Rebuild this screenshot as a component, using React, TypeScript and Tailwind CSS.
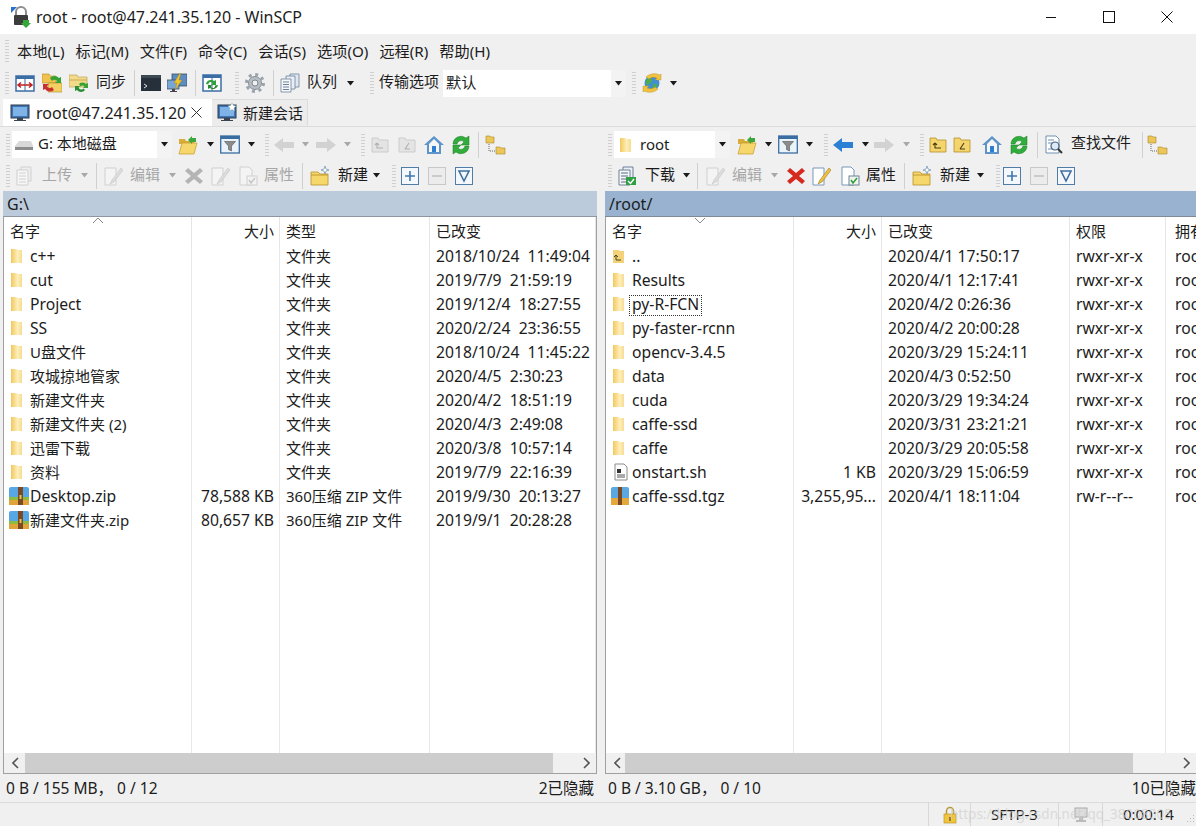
import React from "react";

const F = '"Noto Sans", "Noto Sans CJK SC", sans-serif';

type P = { className?: string };

const Svg = ({ className = "", children, w = 20, h = 20 }: P & { children: React.ReactNode; w?: number; h?: number }) => (
  <svg viewBox={w === 22 ? "0 0 22 20" : "0 0 20 20"} width={w} height={h} className={`shrink-0 ${className}`}>{children}</svg>
);

const Grip = ({ className = "" }: P) => (
  <div className={`w-[4px] h-[22px] shrink-0 bg-[repeating-linear-gradient(to_bottom,#cfcfcf_0,#cfcfcf_1px,#f0f0f0_1px,#f0f0f0_3px)] ${className}`} />
);
const Sep = ({ className = "" }: P) => <div className={`w-px h-[26px] shrink-0 bg-[#d0d0d0] ${className}`} />;
const Caret = ({ className = "", off = false }: P & { off?: boolean }) => (
  <svg width="9" height="5" viewBox="0 0 9 5" className={`shrink-0 ${className}`}>
    <path d="M1 0h7L4.5 4.5z" fill={off ? "#a8a8a8" : "#1a1a1a"} />
  </svg>
);
const Lbl = ({ className = "", children }: P & { children: React.ReactNode }) => (
  <span className={`shrink-0 text-[15px] leading-none whitespace-nowrap ${className}`}>{children}</span>
);

const SmallFolder = () => (
  <svg width="14" height="18" viewBox="0 0 14 18" className="shrink-0">
    <defs>
      <linearGradient id="sf" x1="0" x2="1" y1="0" y2="0">
        <stop offset="0" stopColor="#f2c85c" />
        <stop offset="0.6" stopColor="#fdeebb" />
        <stop offset="1" stopColor="#f7dc92" />
      </linearGradient>
    </defs>
    <path d="M1 2h5l2 1h4v13H1z" fill="url(#sf)" />
  </svg>
);
const UpFolder = () => (
  <svg width="14" height="18" viewBox="0 0 14 18" className="shrink-0">
    <path d="M1 3h5l2 1h4v12H1z" fill="#f3d27a" />
    <path d="M4 8v5h5M4 8l-2 2M4 8l2 2" stroke="#4a4a20" strokeWidth="1" fill="none" />
  </svg>
);
const Zip = () => (
  <svg width="22" height="20" viewBox="0 0 22 20" className="shrink-0 -ml-[2px]">
    <path d="M1 3a2 2 0 0 1 2-2h16a2 2 0 0 1 2 2v9H1z" fill="#57a6e6" />
    <path d="M1 11h20v3H1z" fill="#8dbb3f" />
    <path d="M1 14h20v5H1z" fill="#e0a43a" />
    <path d="M10 1h5v18h-5z" fill="#7a4a22" />
    <path d="M11.5 9h2v4h-2z" fill="#e8c35a" />
  </svg>
);
const Doc = () => (
  <svg width="18" height="18" viewBox="0 0 18 18" className="shrink-0">
    <path d="M3 1h9l3 3v13H3z" fill="#fff" stroke="#8a8a8a" />
    <path d="M5 6h4v4H5z" fill="#333" />
    <path d="M5 12h8M5 14h8" stroke="#555" />
  </svg>
);
const Tgz = () => (
  <svg width="20" height="20" viewBox="0 0 20 20" className="shrink-0 -ml-[2px]">
    <path d="M1 3a2 2 0 0 1 2-2h14a2 2 0 0 1 2 2v9H1z" fill="#5aa7e2" />
    <path d="M1 12h18v7H1z" fill="#e5a83c" />
    <path d="M8 1h4v18H8z" fill="#7a4a22" />
  </svg>
);

const Monitor = ({ star = false }: { star?: boolean }) => (
  <Svg>
    <rect x="1" y="2" width="18" height="13" fill="#3f75b5" stroke="#2d3a4a" />
    <rect x="3" y="4" width="14" height="9" fill="#7fb2e6" />
    <path d="M7 15h6v2h3v1H4v-1h3z" fill="#3a4450" />
    {star && <path d="M15 0l1.5 2.5L19 3l-2 2 .5 3-2.5-1.500L12.500 8l.5-3-2-2 2.500-.5z" fill="#fff" stroke="#8aa" strokeWidth=".5" />}
  </Svg>
);
const SyncFrame = () => (
  <Svg>
    <rect x="1" y="3" width="18" height="15" fill="#fff" stroke="#3a6ea5" strokeWidth="1.5" />
    <rect x="1" y="3" width="18" height="3" fill="#3a6ea5" />
    <path d="M10 6v12" stroke="#3a6ea5" />
    <path d="M3 12h14M6 9.500 3 12l3 2.500M14 9.500l3 2.500-3 2.500" stroke="#c02020" strokeWidth="1.5" fill="none" />
  </Svg>
);
const FolderSyncA = () => (
  <Svg>
    <path d="M0 1h7l1 2h6v7H0z" fill="#f0c14f" stroke="#b08a28" strokeWidth=".6" />
    <path d="M6 10h14v9H6z" fill="#f4cf63" stroke="#b08a28" strokeWidth=".6" />
    <path d="M8 5a6 6 0 0 1 9 0l2-1v6h-6l2-2a3 3 0 0 0-5 0z" fill="#35a335" />
    <path d="M12 17a6 6 0 0 1-9-1l-2 1v-6h6l-2 2a3 3 0 0 0 5 1z" fill="#c83030" />
  </Svg>
);
const FolderSyncB = () => (
  <Svg>
    <path d="M0 2h8l1 2h9v10H0z" fill="#f3d98a" stroke="#b59a45" strokeWidth=".6" />
    <path d="M0 7h18" stroke="#c9ae58" />
    <path d="M10 11a5 5 0 0 1 7 0l2-1v5h-5l1.500-1.500a3 3 0 0 0-4 0z" fill="#35a335" />
    <path d="M16 17a5 5 0 0 1-8 0l-2 1v-5h5l-1.500 1.500a3 3 0 0 0 5 1z" fill="#2a8f30" />
  </Svg>
);
const Terminal = () => (
  <Svg>
    <rect x="0" y="2" width="20" height="16" fill="#25303a" />
    <rect x="0" y="2" width="20" height="3" fill="#3c4852" />
    <path d="M3 11l3 2-3 2" stroke="#ddd" fill="none" />
  </Svg>
);
const Flash = () => (
  <Svg>
    <rect x="5" y="1" width="15" height="12" fill="#5c8cc0" stroke="#33506e" strokeWidth=".8" />
    <rect x="0" y="7" width="12" height="9" fill="#7aa6d4" stroke="#33506e" strokeWidth=".8" />
    <path d="M5 16h3v2h2v1H3v-1h2z" fill="#445" />
    <path d="M13 0 7 10h3l-2 7 7-10h-3l2-7z" fill="#f3c628" stroke="#a8821a" strokeWidth=".4" />
  </Svg>
);
const PanelSync = () => (
  <Svg>
    <rect x="1" y="2" width="18" height="16" fill="#fff" stroke="#3a6ea5" strokeWidth="1.5" />
    <rect x="1" y="2" width="18" height="3" fill="#3a6ea5" />
    <path d="M10 5v13" stroke="#3a6ea5" />
    <path d="M4 11a5 5 0 0 1 8-3l2-1v5h-5l1.500-1.500a2 2 0 0 0-4 1z" fill="#2fa03a" />
    <path d="M16 12a5 5 0 0 1-8 3l-2 1v-4h4l-1 1.500a2 2 0 0 0 4-1z" fill="#2a8a30" />
  </Svg>
);
const Gear = () => (
  <Svg>
    <circle cx="10" cy="10" r="6.5" fill="#b7bdc4" stroke="#868e97" />
    <circle cx="10" cy="10" r="8.5" fill="none" stroke="#9aa2ab" strokeWidth="3" strokeDasharray="3 3.67" />
    <circle cx="10" cy="10" r="3" fill="#f0f0f0" stroke="#7d8690" />
  </Svg>
);
const Queue = () => (
  <Svg>
    <path d="M10 1h9v13h-9z" fill="#dfe8f2" stroke="#6c8199" strokeWidth=".8" />
    <path d="M6 3h9v13H6z" fill="#e8eef5" stroke="#6c8199" strokeWidth=".8" />
    <path d="M1 6h10v13H1z" fill="#f6f8fb" stroke="#6c8199" strokeWidth=".8" />
    <path d="M3 9h6M3 11.500h6M3 14h6M3 16.500h6" stroke="#6c8199" />
  </Svg>
);
const Globe = () => (
  <Svg>
    <circle cx="10" cy="10" r="7.5" fill="#3f8fd6" />
    <path d="M6 5c3-1 5 1 4 3s-4 2-4 5c-2-1-3-6 0-8zM12 11c2-1 4 0 3 2s-3 3-4 2 0-3 1-4z" fill="#4fae48" />
    <path d="M4 4c4-4 10-4 14-2l1-1v6h-6l2-2c-3-1-6-1-8 1zM16 16c-4 4-10 4-14 2l-1 1v-6h6l-2 2c3 1 6 1 8-1z" fill="#f0c23e" stroke="#b58c20" strokeWidth=".4" />
  </Svg>
);
const Drive = () => (
  <svg width="18" height="14" viewBox="0 0 18 14" className="shrink-0">
    <path d="M4 3h12l2 5v3H0V8z" fill="#d8d8d8" />
    <path d="M0 9h18v3H0z" fill="#8d8d8d" />
  </svg>
);
const OpenFolder = () => (
  <Svg>
    <path d="M1 4h6l1 2h8v3H1z" fill="#d9ad3a" />
    <path d="M1 19 4 8h15l-3 11z" fill="#f5d76b" stroke="#c39a2e" strokeWidth=".7" />
    <path d="M10 5l4-4v2h4v4h-4v2z" fill="#3da63c" />
  </Svg>
);
const Filter = () => (
  <Svg>
    <rect x=".7" y="1" width="18.6" height="17" fill="#eaf2fa" stroke="#3b6ea0" strokeWidth="1.3" />
    <rect x="1" y="1" width="18" height="3" fill="#3b6ea0" />
    <path d="M4.5 6.500h11L11.500 11v5l-3-1.500V11z" fill="#8c8c8c" stroke="#555" strokeWidth=".6" />
  </Svg>
);
const Arrow = ({ dir, on = false }: { dir: "l" | "r"; on?: boolean }) => (
  <svg width="22" height="16" viewBox="0 0 22 16" className="shrink-0">
    <path d={dir === "l" ? "M1 8l9-7v4h11v6H10v4z" : "M21 8l-9-7v4H1v6h11v4z"} fill={on ? "#2b7fd4" : "#d2d2d2"} />
  </svg>
);
const SqFolder = ({ on = false, glyph }: { on?: boolean; glyph: "up" | "root" }) => (
  <svg width="20" height="20" viewBox="0 0 20 20" className="shrink-0">
    <path d="M2 3h6l1 2h9v12H2z" fill={on ? "#f4d46c" : "#e4e4e4"} stroke={on ? "#b58f2c" : "#c4c4c4"} strokeWidth=".8" />
    <path d={glyph === "up" ? "M7 8v5h6M7 8 5 10M7 8l2 2" : "M8 14l4-6M8 14h5"} stroke={on ? "#4a3a10" : "#b0b0b0"} fill="none" strokeWidth="1.1" />
  </svg>
);
const Home = () => (
  <Svg>
    <path d="M10 1 0 10h3v9h14v-9h3z" fill="#5e94c8" />
    <path d="M10 4 5 9v8h10V9z" fill="#f6f6f6" />
    <path d="M8 11h4v6H8z" fill="#2f7fd0" />
  </Svg>
);
const Refresh = () => (
  <Svg>
    <path d="M2 9a8 8 0 0 1 13-6l3-2v9h-8l3-3a4 4 0 0 0-7 2z" fill="#31ad3c" stroke="#1c7a25" strokeWidth=".5" />
    <path d="M18 11a8 8 0 0 1-13 6l-3 2v-9h8l-3 3a4 4 0 0 0 7-2z" fill="#31ad3c" stroke="#1c7a25" strokeWidth=".5" />
  </Svg>
);
const Tree = () => (
  <Svg w={22}>
    <path d="M1 1h4l1 1h3v6H1z" fill="#edc65a" stroke="#a8882c" strokeWidth=".6" />
    <path d="M11 12h4l1 1h4v6h-9z" fill="#edc65a" stroke="#a8882c" strokeWidth=".6" />
    <path d="M4 9v7h6" stroke="#666" strokeDasharray="1 1" fill="none" />
  </Svg>
);
const Find = () => (
  <Svg>
    <path d="M2 1h10l3 3v14H2z" fill="#fff" stroke="#6f8fb0" />
    <path d="M4 5h6M4 8h4M4 14h5" stroke="#6f8fb0" />
    <circle cx="11" cy="11" r="4" fill="#dcebf7" stroke="#44607c" strokeWidth="1.2" />
    <path d="m14 14 4 4" stroke="#333" strokeWidth="2" />
  </Svg>
);
const Stack = ({ on = false, dl = false }: { on?: boolean; dl?: boolean }) => (
  <Svg>
    <path d="M6 1h10v14H6z" fill={on ? "#e9eff6" : "#eee"} stroke={on ? "#6c8199" : "#d0d0d0"} />
    <path d="M2 4h11v15H2z" fill="#f7f7f7" stroke={on ? "#6c8199" : "#cfcfcf"} />
    <path d="M4 7h7M4 10h7M4 13h7M4 16h7" stroke={on ? "#556b82" : "#d0d0d0"} />
    {dl && <path d="M9 11h10v8H9z" fill="#2f9e44" />}
    {dl && <path d="m11 15 2.5 2.500L17 13" stroke="#fff" strokeWidth="1.4" fill="none" />}
  </Svg>
);
const Edit = ({ on = false }: { on?: boolean }) => (
  <Svg>
    <path d="M2 2h11v17H2z" fill={on ? "#fff" : "#f4f4f4"} stroke={on ? "#7a97b8" : "#d0d0d0"} />
    <path d="M18 2 9 14l-2 4 4-2 9-12z" fill={on ? "#f0c040" : "#dcdcdc"} stroke={on ? "#9a7a20" : "#c8c8c8"} strokeWidth=".6" />
  </Svg>
);
const Del = ({ on = false }: { on?: boolean }) => (
  <svg width="20" height="20" viewBox="0 0 20 20" className="shrink-0">
    <path d="M4 2l6 5 6-5 3 3-6 5 6 5-3 3-6-5-6 5-3-3 6-5-6-5z" fill={on ? "#d42a20" : "#b4b4b4"} />
  </svg>
);
const Props = ({ on = false }: { on?: boolean }) => (
  <Svg>
    <path d="M2 1h9l3 3v15H2z" fill={on ? "#fff" : "#f4f4f4"} stroke={on ? "#7a97b8" : "#d0d0d0"} />
    <rect x="9" y="10" width="10" height="9" fill={on ? "#eef5ea" : "#f2f2f2"} stroke={on ? "#6c8199" : "#cfcfcf"} />
    <path d="m11 14 2 3 4-5" stroke={on ? "#2a9a35" : "#c4c4c4"} strokeWidth="1.4" fill="none" />
  </Svg>
);
const NewFolder = () => (
  <Svg>
    <path d="M1 6h7l2 2h8v11H1z" fill="#f5d76b" stroke="#b58f2c" strokeWidth=".8" />
    <path d="M1 9h17" stroke="#c39a2e" />
    <path d="M15 0l1 3 3 1-3 1-1 3-1-3-3-1 3-1z" fill="#fff" stroke="#6c8fb0" strokeWidth=".7" />
  </Svg>
);
const BoxBtn = ({ kind, on = true }: { kind: "plus" | "minus" | "fil"; on?: boolean }) => (
  <svg width="18" height="18" viewBox="0 0 18 18" className="shrink-0">
    <rect x=".5" y=".5" width="17" height="17" fill={on ? "#f4f8fc" : "#ececec"} stroke={on ? "#4f7da8" : "#c8c8c8"} />
    {kind === "plus" && <path d="M4 9h10M9 4v10" stroke="#3f78ae" strokeWidth="1.6" />}
    {kind === "minus" && <path d="M4 9h10" stroke="#c4c4c4" strokeWidth="1.6" />}
    {kind === "fil" && <path d="M4 4h10L9 14z" fill="none" stroke="#3f6f9e" strokeWidth="1.6" />}
  </svg>
);
const Combo = ({ className = "", children }: P & { children: React.ReactNode }) => (
  <div className={`h-[27px] bg-white flex items-center shrink-0 ${className}`}>{children}</div>
);
const DropBtn = () => (
  <div className="ml-auto w-[15px] h-full bg-[#f3f3f3] flex items-center justify-center"><Caret /></div>
);

type Row = { icon: React.ReactNode; name: string; size?: string; type?: string; date: string; perm?: string };

const LEFT: Row[] = [
  ["c++", "2018/10/24  11:49:04"],
  ["cut", "2019/7/9  21:59:19"],
  ["Project", "2019/12/4  18:27:55"],
  ["SS", "2020/2/24  23:36:55"],
  ["U盘文件", "2018/10/24  11:45:22"],
  ["攻城掠地管家", "2020/4/5  2:30:23"],
  ["新建文件夹", "2020/4/2  18:51:19"],
  ["新建文件夹 (2)", "2020/4/3  2:49:08"],
  ["迅雷下载", "2020/3/8  10:57:14"],
  ["资料", "2019/7/9  22:16:39"],
].map(([name, date]) => ({ icon: <SmallFolder />, name, type: "文件夹", date }));
LEFT.push(
  { icon: <Zip />, name: "Desktop.zip", size: "78,588 KB", type: "360压缩 ZIP 文件", date: "2019/9/30  20:13:27" },
  { icon: <Zip />, name: "新建文件夹.zip", size: "80,657 KB", type: "360压缩 ZIP 文件", date: "2019/9/1  20:28:28" },
);

const RIGHT: Row[] = [
  { icon: <UpFolder />, name: "..", date: "2020/4/1 17:50:17", perm: "rwxr-xr-x" },
  ...[
    ["Results", "2020/4/1 12:17:41"],
    ["py-R-FCN", "2020/4/2 0:26:36"],
    ["py-faster-rcnn", "2020/4/2 20:00:28"],
    ["opencv-3.4.5", "2020/3/29 15:24:11"],
    ["data", "2020/4/3 0:52:50"],
    ["cuda", "2020/3/29 19:34:24"],
    ["caffe-ssd", "2020/3/31 23:21:21"],
    ["caffe", "2020/3/29 20:05:58"],
  ].map(([name, date]) => ({ icon: <SmallFolder />, name, date, perm: "rwxr-xr-x" })),
  { icon: <Doc />, name: "onstart.sh", size: "1 KB", date: "2020/3/29 15:06:59", perm: "rwxr-xr-x" },
  { icon: <Tgz />, name: "caffe-ssd.tgz", size: "3,255,95...", date: "2020/4/1 18:11:04", perm: "rw-r--r--" },
];

const Cell = ({ className = "", tight = false, children }: P & { tight?: boolean; children?: React.ReactNode }) => (
  <div className={`border-r border-[#e8e8e8] flex items-center whitespace-pre overflow-hidden ${tight ? "text-[15px]" : "text-[15.7px] pt-[2px]"} ${className}`}>{children}</div>
);

const isCjk = (s: string) => /[\u4e00-\u9fff]/.test(s);

const NameCell = ({ r, focus }: { r: Row; focus?: boolean }) => {
  const tight = isCjk(r.name);
  return (
    <Cell tight={tight}>
      <div className={`w-[26px] pl-[6px] flex justify-start shrink-0 ${tight ? "" : "-mt-[2px]"}`}>{r.icon}</div>
      <span className={focus ? "outline-1 outline-dotted outline-[#333] px-[2px] ml-[-2px] h-[19px] flex items-center" : ""}>{r.name}</span>
    </Cell>
  );
};

const Header = ({ labels, grid, sort }: { labels: [string, boolean, string?][]; grid: string; sort: React.ReactNode }) => (
  <div className={`relative h-[27px] shrink-0 grid ${grid}`}>
    {labels.map(([t, right, extra], i) => (
      <div key={i} className={`border-r border-[#e5e5e5] flex items-center whitespace-nowrap overflow-hidden text-[15px] pt-[1px] ${right ? "justify-end pr-[5px]" : "pl-[6px]"} ${extra ?? ""}`}>{t}</div>
    ))}
    {sort}
  </div>
);

const Scroll = ({ thumb }: { thumb: string }) => (
  <div className="h-[20px] shrink-0 bg-[#f0f0f0] flex items-center">
    <svg width="8" height="12" viewBox="0 0 8 12" className="ml-[8px] shrink-0"><path d="M6 1 1 6l5 5" stroke="#555" strokeWidth="1.6" fill="none" /></svg>
    <div className={`h-full bg-[#cdcdcd] shrink-0 ${thumb}`} />
    <svg width="8" height="12" viewBox="0 0 8 12" className="ml-auto mr-[6px] shrink-0"><path d="m2 1 5 5-5 5" stroke="#555" strokeWidth="1.6" fill="none" /></svg>
  </div>
);

const LeftPanel = () => {
  const grid = "grid-cols-[188px_88px_150px_1fr]";
  return (
    <div className="w-[594px] shrink-0 flex flex-col">
      <div className="h-[31px] flex items-center shrink-0">
        <Grip className="ml-[3px]" />
        <Combo className="w-[160px] ml-[2px]">
          <div className="ml-[3px]"><Drive /></div>
          <Lbl className="ml-[5px] text-[14.5px] -mt-[2px]">G: 本地磁盘</Lbl>
          <DropBtn />
        </Combo>
        <div className="ml-[6px]"><OpenFolder /></div>
        <Caret className="ml-[8px]" />
        <div className="ml-[5px]"><Filter /></div>
        <Caret className="ml-[7px]" />
        <Grip className="ml-[9px]" />
        <div className="ml-[4px]"><Arrow dir="l" /></div>
        <Caret off className="ml-[6px]" />
        <div className="ml-[5px]"><Arrow dir="r" /></div>
        <Caret off className="ml-[6px]" />
        <Grip className="ml-[9px]" />
        <div className="ml-[5px]"><SqFolder glyph="up" /></div>
        <div className="ml-[7px]"><SqFolder glyph="root" /></div>
        <div className="ml-[7px]"><Home /></div>
        <div className="ml-[7px]"><Refresh /></div>
        <Sep className="ml-[7px]" />
        <div className="ml-[6px]"><Tree /></div>
      </div>
      <div className="h-[31px] flex items-center shrink-0 text-[#a6a6a6]">
        <Grip className="ml-[3px]" />
        <div className="ml-[5px]"><Stack /></div>
        <Lbl className="ml-[7px] -mt-[2px]">上传</Lbl>
        <Caret off className="ml-[8px]" />
        <Sep className="ml-[7px]" />
        <div className="ml-[6px]"><Edit /></div>
        <Lbl className="ml-[7px] -mt-[2px]">编辑</Lbl>
        <Caret off className="ml-[8px]" />
        <div className="ml-[7px]"><Del /></div>
        <div className="ml-[6px]"><Edit /></div>
        <div className="ml-[8px]"><Props /></div>
        <Lbl className="ml-[6px] -mt-[2px]">属性</Lbl>
        <Sep className="ml-[8px]" />
        <div className="ml-[7px]"><NewFolder /></div>
        <Lbl className="ml-[8px] -mt-[2px] text-[#1a1a1a]">新建</Lbl>
        <Caret className="ml-[4px]" />
        <Grip className="ml-[11px]" />
        <div className="ml-[5px]"><BoxBtn kind="plus" /></div>
        <div className="ml-[9px]"><BoxBtn kind="minus" on={false} /></div>
        <div className="ml-[9px]"><BoxBtn kind="fil" /></div>
      </div>
      <div className="h-[26px] shrink-0 bg-[#bccbdb] border-b border-[#8e979f] flex items-center pl-[4px] text-[16px]">G:\</div>
      <div className="flex-1 min-h-0 flex flex-col bg-white border-l border-r border-[#a0a0a0]">
        <Header
          grid={grid}
          labels={[["名字", false], ["大小", true], ["类型", false], ["已改变", false]]}
          sort={
            <svg width="10" height="5" viewBox="0 0 10 5" className="absolute left-[89px] top-[1px]">
              <path d="M0 5l5-5 5 5" stroke="#888" fill="none" />
            </svg>
          }
        />
        <div className={`flex-1 min-h-0 overflow-hidden grid ${grid} grid-rows-[repeat(12,24px)_1fr]`}>
          {LEFT.map((r) => (
            <React.Fragment key={r.name}>
              <NameCell r={r} />
              <Cell className="justify-end pr-[5px]">{r.size}</Cell>
              <Cell tight className="pl-[6px]">{r.type}</Cell>
              <Cell className="pl-[6px]">{r.date}</Cell>
            </React.Fragment>
          ))}
          <Cell /><Cell /><Cell /><Cell />
        </div>
        <Scroll thumb="ml-[5px] w-[528px]" />
      </div>
      <div className="h-[29px] shrink-0 flex items-center justify-between pl-[3px] pr-[3px] pt-[2px] border-t border-[#a0a0a0] text-[15.5px]">
        <span className="whitespace-pre">0 B / 155 MB， 0 / 12</span>
        <span>2已隐藏</span>
      </div>
    </div>
  );
};

const RightPanel = () => {
  const grid = "grid-cols-[188px_88px_188px_96px_60px]";
  return (
    <div className="w-[591px] shrink-0 flex flex-col overflow-hidden">
      <div className="h-[31px] flex items-center shrink-0">
        <Grip className="ml-[3px]" />
        <Combo className="w-[116px] ml-[2px]">
          <div className="ml-[5px]"><SmallFolder /></div>
          <Lbl className="ml-[7px] text-[15.7px]">root</Lbl>
          <DropBtn />
        </Combo>
        <div className="ml-[7px]"><OpenFolder /></div>
        <Caret className="ml-[7px]" />
        <div className="ml-[5px]"><Filter /></div>
        <Caret className="ml-[7px]" />
        <Grip className="ml-[10px]" />
        <div className="ml-[4px]"><Arrow dir="l" on /></div>
        <Caret className="ml-[7px]" />
        <div className="ml-[3px]"><Arrow dir="r" /></div>
        <Caret off className="ml-[7px]" />
        <Grip className="ml-[9px]" />
        <div className="ml-[4px]"><SqFolder on glyph="up" /></div>
        <div className="ml-[4px]"><SqFolder on glyph="root" /></div>
        <div className="ml-[10px]"><Home /></div>
        <div className="ml-[7px]"><Refresh /></div>
        <Sep className="ml-[8px]" />
        <div className="ml-[6px]"><Find /></div>
        <Lbl className="ml-[7px] -mt-[4px]">查找文件</Lbl>
        <Sep className="ml-[11px]" />
        <div className="ml-[4px]"><Tree /></div>
      </div>
      <div className="h-[31px] flex items-center shrink-0 text-[#a6a6a6]">
        <Grip className="ml-[3px]" />
        <div className="ml-[5px]"><Stack on dl /></div>
        <Lbl className="ml-[8px] -mt-[2px] text-[#1a1a1a]">下载</Lbl>
        <Caret className="ml-[7px]" />
        <Sep className="ml-[6px]" />
        <div className="ml-[7px]"><Edit /></div>
        <Lbl className="ml-[7px] -mt-[2px]">编辑</Lbl>
        <Caret off className="ml-[8px]" />
        <div className="ml-[7px]"><Del on /></div>
        <div className="ml-[5px]"><Edit on /></div>
        <div className="ml-[9px]"><Props on /></div>
        <Lbl className="ml-[6px] -mt-[2px] text-[#1a1a1a]">属性</Lbl>
        <Sep className="ml-[8px]" />
        <div className="ml-[7px]"><NewFolder /></div>
        <Lbl className="ml-[8px] -mt-[2px] text-[#1a1a1a]">新建</Lbl>
        <Caret className="ml-[6px]" />
        <Grip className="ml-[11px]" />
        <div className="ml-[3px]"><BoxBtn kind="plus" /></div>
        <div className="ml-[9px]"><BoxBtn kind="minus" on={false} /></div>
        <div className="ml-[9px]"><BoxBtn kind="fil" /></div>
      </div>
      <div className="h-[26px] shrink-0 bg-[#98b2d0] border-b border-[#7f8a96] flex items-center pl-[4px] text-[16px]">/root/</div>
      <div className="flex-1 min-h-0 flex flex-col bg-white border-l border-[#a0a0a0]">
        <Header
          grid={grid}
          labels={[["名字", false], ["大小", true], ["已改变", false], ["权限", false], ["拥有", false, "pl-[9px]"]]}
          sort={
            <svg width="10" height="5" viewBox="0 0 10 5" className="absolute left-[89px] top-[1px]">
              <path d="M0 0l5 5 5-5" stroke="#888" fill="none" />
            </svg>
          }
        />
        <div className={`flex-1 min-h-0 overflow-hidden grid ${grid} grid-rows-[repeat(11,24px)_1fr]`}>
          {RIGHT.map((r) => (
            <React.Fragment key={r.name}>
              <NameCell r={r} focus={r.name === "py-R-FCN"} />
              <Cell className="justify-end pr-[5px]">{r.size}</Cell>
              <Cell className="pl-[6px]">{r.date}</Cell>
              <Cell className="pl-[6px]">{r.perm}</Cell>
              <Cell className="pl-[9px]">root</Cell>
            </React.Fragment>
          ))}
          <Cell /><Cell /><Cell /><Cell /><Cell />
        </div>
        <Scroll thumb="ml-[3px] w-[508px]" />
      </div>
      <div className="h-[29px] shrink-0 flex items-center justify-between pl-[3px] pt-[2px] border-t border-[#a0a0a0] text-[15.5px]">
        <span className="whitespace-pre">0 B / 3.10 GB， 0 / 10</span>
        <span>10已隐藏</span>
      </div>
    </div>
  );
};

export default function App() {
  return (
    <div className="relative w-[1196px] h-[826px] overflow-hidden bg-[#f0f0f0] flex flex-col text-[15px] text-[#1c1c1c]" style={{ fontFamily: F }}>
      <div className="h-[34px] shrink-0 bg-white flex items-center">
        <svg width="22" height="22" viewBox="0 0 22 22" className="ml-[10px] shrink-0">
          <path d="M1 1h6L1 7z" fill="#2b6fd0" />
          <path d="M6 9V6a5 5 0 0 1 10 0v3" fill="none" stroke="#8d8d8d" strokeWidth="2" />
          <rect x="4" y="9" width="14" height="10" rx="1" fill="#3c3c3c" />
          <path d="M13 14v3h-2l5 5 5-5h-2v-3z" fill="#35a83a" />
        </svg>
        <span className="ml-[4px] text-[16px]">root - root@47.241.35.120 - WinSCP</span>
        <div className="ml-auto flex items-center">
          <div className="w-[58px] flex justify-center">
            <svg width="12" height="12" viewBox="0 0 12 12"><path d="M1 6.500h10" stroke="#111" /></svg>
          </div>
          <div className="w-[58px] flex justify-center">
            <svg width="12" height="12" viewBox="0 0 12 12"><rect x=".5" y=".5" width="11" height="11" fill="none" stroke="#111" /></svg>
          </div>
          <div className="w-[58px] flex justify-center">
            <svg width="12" height="12" viewBox="0 0 12 12"><path d="m.5.500 11 11m0-11-11 11" stroke="#111" /></svg>
          </div>
        </div>
      </div>
      <div className="h-[34px] shrink-0 flex items-center">
        <Grip className="ml-[5px]" />
        <div className="ml-[8px] flex gap-[11px] text-[15.2px]">
          {["本地(L)", "标记(M)", "文件(F)", "命令(C)", "会话(S)", "选项(O)", "远程(R)", "帮助(H)"].map((m) => (
            <span key={m}>{m}</span>
          ))}
        </div>
      </div>
      <div className="h-[30px] shrink-0 flex items-center">
        <Grip className="ml-[5px]" />
        <div className="ml-[6px]"><SyncFrame /></div>
        <div className="ml-[7px]"><FolderSyncA /></div>
        <div className="ml-[7px]"><FolderSyncB /></div>
        <Lbl className="ml-[7px] -mt-[4px]">同步</Lbl>
        <Sep className="ml-[8px]" />
        <div className="ml-[6px]"><Terminal /></div>
        <div className="ml-[6px]"><Flash /></div>
        <Sep className="ml-[8px]" />
        <div className="ml-[6px]"><PanelSync /></div>
        <Grip className="ml-[13px]" />
        <div className="ml-[6px]"><Gear /></div>
        <Sep className="ml-[8px]" />
        <div className="ml-[6px]"><Queue /></div>
        <Lbl className="ml-[7px] -mt-[4px]">队列</Lbl>
        <Caret className="ml-[9px]" />
        <Grip className="ml-[15px]" />
        <Lbl className="ml-[5px] -mt-[4px] text-[15.2px]">传输选项</Lbl>
        <Combo className="ml-[4px] w-[183px]">
          <span className="ml-[3px] -mt-[2px] text-[15.2px]">默认</span>
          <DropBtn />
        </Combo>
        <Grip className="ml-[6px]" />
        <div className="ml-[6px]"><Globe /></div>
        <Caret className="ml-[7px]" />
      </div>
      <div className="h-[29px] shrink-0 flex items-end border-b border-[#dcdcdc]">
        <div className="ml-[3px] w-[209px] h-[27px] bg-white flex items-center">
          <div className="ml-[7px]"><Monitor /></div>
          <span className="ml-[6px] text-[16px]">root@47.241.35.120</span>
          <svg width="11" height="11" viewBox="0 0 11 11" className="ml-[5px]"><path d="m.5.500 10 10m0-10-10 10" stroke="#333" /></svg>
        </div>
        <div className="w-[96px] h-[27px] bg-[#ececec] border-r border-t border-[#dcdcdc] flex items-center">
          <div className="ml-[5px]"><Monitor star /></div>
          <span className="ml-[6px] text-[15px]">新建会话</span>
        </div>
      </div>
      <div className="flex-1 min-h-0 flex pl-[3px] gap-[8px] pt-[2px]">
        <LeftPanel />
        <RightPanel />
      </div>
      <div className="h-[24px] shrink-0 border-t border-[#dcdcdc] flex items-center justify-end text-[15px]">
        <div className="w-[42px] h-full border-l border-[#d8d8d8] flex items-center justify-center">
          <svg width="14" height="18" viewBox="0 0 14 18">
            <path d="M3.5 8V5a3.5 3.5 0 0 1 7 0v3" fill="none" stroke="#b59a3a" strokeWidth="1.5" />
            <rect x="1" y="8" width="12" height="9" fill="#f2c63c" stroke="#b08a20" strokeWidth=".6" />
            <path d="M7 15v-4" stroke="#333" />
          </svg>
        </div>
        <div className="w-[88px] h-full border-l border-[#d8d8d8] flex items-center justify-center">SFTP-3</div>
        <div className="w-[44px] h-full border-l border-[#d8d8d8] flex items-center justify-center">
          <svg width="18" height="18" viewBox="0 0 18 18">
            <rect x="3" y="2" width="12" height="9" fill="#dcdcdc" stroke="#aaa" />
            <path d="M7 11h4v3h3v2H4v-2h3z" fill="#bbb" />
          </svg>
        </div>
        <div className="w-[94px] h-full border-l border-[#d8d8d8] flex items-center pl-[20px]">
          <span>0:00:14</span>
          <svg width="12" height="12" viewBox="0 0 12 12" className="ml-auto mr-[1px] self-end mb-[1px]">
            <path d="M10 2h1v1h-1zM7 5h1v1H7zM10 5h1v1h-1zM4 8h1v1H4zM7 8h1v1H7zM10 8h1v1h-1z" fill="#b8b8b8" />
          </svg>
        </div>
      </div>
      <div className="absolute left-[950px] top-[804px] text-[13.5px] text-[#cfcfcf]/70 whitespace-nowrap pointer-events-none">https://blog.csdn.net/qq_38008005</div>
    </div>
  );
}
